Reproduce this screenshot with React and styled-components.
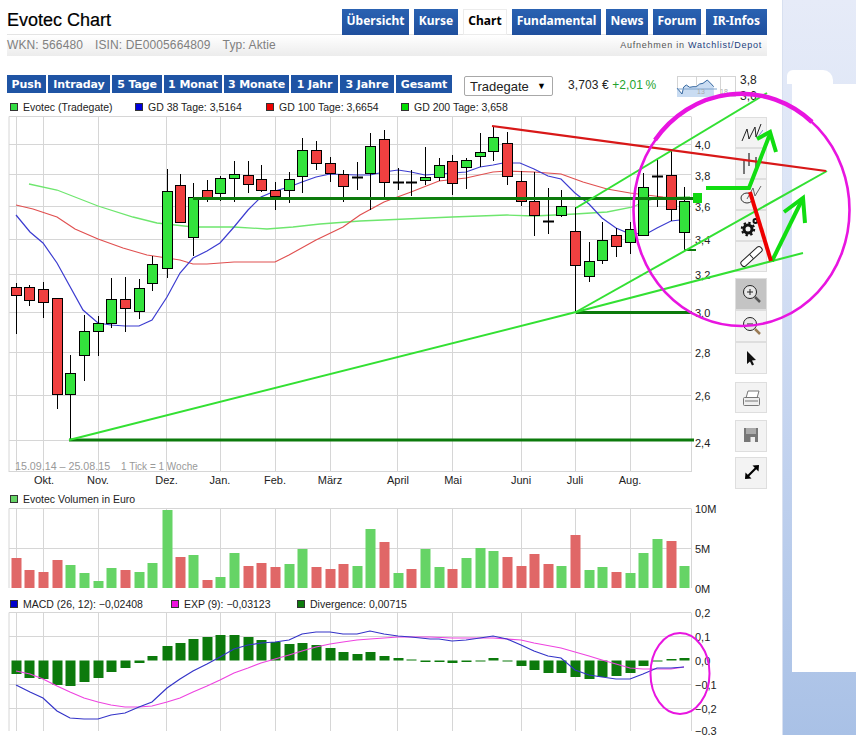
import React from "react";
import styled, { createGlobalStyle } from "styled-components";

const GlobalStyle = createGlobalStyle`
  html, body {
    margin: 0;
    padding: 0;
    background: #fff;
    font-family: "Liberation Sans", Arial, sans-serif;
  }
`;

const Page = styled.div`
  position: relative;
  display: flex;
  width: 856px;
  height: 735px;
  overflow: hidden;
`;
const Main = styled.div`
  width: 782px;
  flex: none;
  border-right: 1px solid #d8e0f0;
`;
const Side = styled.div`
  flex: 1;
  padding: 70px 0 0 9px;
  background: linear-gradient(180deg, #e6ebf8 0, #dce5f6 25%, #c3d3ef 60%, #a9c1e6 100%);
`;
const SideBlob = styled.div`
  width: 46px;
  height: 14px;
  margin-left: -5px;
  border-radius: 6px 10px 0 0;
  background: #fff;
`;
const SidePatch = styled.div`
  height: 588px;
  background: #fff;
`;

const Header = styled.div`
  display: flex;
  justify-content: space-between;
  align-items: flex-end;
  height: 34px;
  margin: 0 15px 0 7px;
  border-bottom: 1px solid #e4e4e4;
`;
const Title = styled.h1`
  margin: 0 0 3px;
  font-size: 18px;
  line-height: 22px;
  font-weight: 400;
  color: #000;
  -webkit-text-stroke: 0.2px #000;
`;
const Tabs = styled.div`
  display: flex;
  gap: 5px;
  margin-bottom: -1px;
`;
const Tab = styled.a`
  width: ${(p) => p.$width}px;
  height: 26px;
  box-sizing: border-box;
  padding-bottom: 3px;
  display: flex;
  align-items: center;
  justify-content: center;
  font-family: "Noto Sans", Tahoma, sans-serif;
  font-size: 12px;
  font-weight: 700;
  color: ${(p) => (p.$active ? "#000" : "#fff")};
  background: ${(p) => (p.$active ? "#fff" : "linear-gradient(180deg, #2a62b2, #1f4f9d)")};
  box-shadow: ${(p) => (p.$active ? "inset 0 0 0 1px #ececec" : "none")};
`;
const SubBar = styled.div`
  display: flex;
  justify-content: space-between;
  align-items: center;
  height: 21px;
  margin: 0 15px 0 7px;
  padding: 0 5px 2px 0;
  box-sizing: border-box;
  background: linear-gradient(180deg, #fff, #ececec);
`;
const Codes = styled.div`
  display: flex;
  gap: 12px;
  font-size: 12px;
  letter-spacing: 0.12px;
  color: #808080;
`;
const Watch = styled.div`
  font-size: 9px;
  letter-spacing: 0.75px;
  color: #555;
  & a {
    color: #1c3f80;
  }
`;

const Controls = styled.div`
  display: flex;
  align-items: flex-start;
  height: 42px;
  box-sizing: border-box;
  padding: 19px 0 0 7px;
`;
const Ranges = styled.div`
  display: flex;
  gap: 2px;
`;
const Range = styled.a`
  width: ${(p) => p.$width}px;
  height: 18px;
  display: flex;
  align-items: center;
  justify-content: center;
  font-family: "DejaVu Sans", Verdana, sans-serif;
  font-size: 11px;
  font-weight: 700;
  letter-spacing: -0.1px;
  white-space: nowrap;
  color: #fff;
  background: #1f54a4;
`;
const Exchange = styled.div`
  width: 89px;
  height: 20px;
  box-sizing: border-box;
  margin: 1px 0 0 12px;
  padding: 0 6px 0 5px;
  display: flex;
  justify-content: space-between;
  align-items: center;
  border: 1px solid #a8a8a8;
  border-radius: 2px;
  font-size: 13px;
  color: #222;
  & span:last-child {
    font-size: 9px;
    color: #000;
  }
`;
const Quote = styled.div`
  width: 109px;
  margin: 3px 0 0 15px;
  font-size: 12px;
  line-height: 14px;
  letter-spacing: 0.1px;
  color: #222;
  white-space: nowrap;
  & em {
    font-style: normal;
    color: #22a32c;
  }
`;
const MiniChart = styled.svg`
  width: 82px;
  height: 26px;
  margin-top: 1px;
  flex: none;
  overflow: visible;
  font-family: "Liberation Sans", Arial, sans-serif;
`;

const ChartRow = styled.div`
  display: flex;
`;
const ChartColumn = styled.div`
  width: 735px;
  flex: none;
`;
const Legend = styled.div`
  display: flex;
  height: ${(p) => p.$height}px;
  align-items: center;
  padding-left: 10px;
  font-size: 10.5px;
  color: #222;
`;
const LegendItem = styled.span`
  display: flex;
  align-items: center;
  gap: 5px;
  width: ${(p) => (p.$width ? `${p.$width}px` : "auto")};
  white-space: nowrap;
`;
const Swatch = styled.i`
  width: 8px;
  height: 8px;
  box-sizing: border-box;
  border: 1px solid #333;
  background: ${(p) => p.$color};
`;
const Plot = styled.svg`
  display: block;
  width: 735px;
  height: ${(p) => p.$height}px;
  overflow: visible;
  font-family: "Liberation Sans", Arial, sans-serif;
  font-size: 11px;
  fill: #222;
`;

const Toolbar = styled.div`
  width: 32px;
  padding-top: 19px;
  display: flex;
  flex-direction: column;
`;
const Tool = styled.button`
  width: 32px;
  height: ${(p) => p.$height || 31}px;
  margin-top: ${(p) => p.$gap || 0}px;
  padding: 0;
  display: flex;
  align-items: center;
  justify-content: center;
  box-sizing: border-box;
  border: 1px solid #dedede;
  background: ${(p) => (p.$active ? "#c4c4c4" : "#f3f3f3")};
`;
const Icon = styled.svg`
  width: 24px;
  height: 24px;
  display: block;
`;
const Overlay = styled.svg`
  position: absolute;
  inset: 0;
  width: 856px;
  height: 735px;
  pointer-events: none;
`;

const gridX = [9, 16.5, 43.5, 98.5, 166.5, 220.5, 275.5, 330.5, 397.5, 452.5, 521.5, 575.5, 630.5, 691.5];

// x, wick top, wick bottom, body top, body bottom, colour (d = doji)
const candles = [
  [16, 283, 334, 287, 295, "r"], [29, 285, 306, 287, 300, "r"], [43, 282, 318, 289, 302, "r"],
  [57, 298, 409, 298, 394, "r"], [70, 355, 440, 373, 394, "g"], [84, 315, 381, 331, 355, "g"],
  [98, 316, 356, 323, 331, "g"], [111, 278, 328, 299, 323, "g"], [125, 277, 332, 299, 308, "r"],
  [139, 279, 319, 288, 311, "g"], [152, 256, 291, 264, 283, "g"], [167, 169, 278, 191, 268, "g"],
  [180, 174, 222, 185, 222, "r"], [193, 183, 256, 197, 237, "g"], [207, 180, 202, 190, 198, "r"],
  [220, 176, 201, 178, 193, "g"], [234, 161, 202, 174, 178, "g"], [248, 161, 193, 175, 184, "r"],
  [261, 165, 192, 179, 190, "r"], [275, 182, 210, 190, 196, "r"], [289, 172, 203, 179, 190, "g"],
  [302, 138, 193, 150, 176, "g"], [316, 141, 170, 150, 163, "r"], [330, 157, 182, 163, 173, "r"],
  [343, 170, 202, 174, 186, "r"], [357, 162, 190, 177, 177, "d"], [370, 133, 210, 146, 173, "g"],
  [384, 130, 198, 139, 182, "r"], [398, 168, 190, 182, 182, "d"], [411, 170, 196, 182, 182, "d"],
  [425, 147, 185, 177, 180, "g"], [439, 158, 181, 165, 177, "g"], [452, 155, 195, 161, 183, "r"],
  [466, 158, 189, 160, 167, "g"], [480, 133, 167, 152, 156, "g"], [493, 127, 161, 137, 151, "g"],
  [507, 132, 185, 143, 176, "r"], [521, 171, 206, 181, 201, "r"], [534, 172, 236, 201, 215, "r"],
  [548, 188, 234, 221, 221, "d"], [561, 190, 217, 206, 215, "g"], [575, 207, 312, 231, 265, "r"],
  [589, 242, 282, 261, 276, "g"], [602, 222, 264, 240, 260, "g"], [616, 228, 257, 235, 246, "r"],
  [630, 222, 254, 229, 242, "g"], [643, 173, 236, 187, 235, "g"], [657, 159, 207, 176, 176, "d"],
  [671, 150, 221, 175, 209, "r"], [684, 187, 250, 201, 232, "g"],
];

const gd38 = "16,215 30,232 43,243 57,263 83,310 98,323 111,325 125,326 139,326 152,320 167,297 180,273 193,258 207,251 220,243 234,227 248,210 261,197 275,191 289,187 302,182 316,177 330,174 357,175 370,175 384,172 398,170 411,172 425,175 439,174 452,173 466,172 480,167 493,165 503,163 520,163 534,169 548,176 561,179 575,193 589,204 602,218 616,228 630,234 648,233 657,228 671,221 680,220";
const gd100 = "16,205 33,209 57,217 75,229 98,239 123,248 147,255 167,258 180,260 193,264 207,264 234,262 275,262 289,255 316,240 343,227 360,215 384,202 411,192 439,181 466,178 493,172 507,171 534,172 561,174 583,182 607,189 630,193 663,197 690,198";
const gd200 = "29,184 57,190 98,206 133,217 157,223 193,227 234,227 267,229 293,227 320,224 360,221 452,217 507,215 534,216 575,214 607,212 633,207 643,202 657,198 690,197";

const priceTicks = [["4,0", 149], ["3,8", 180], ["3,6", 211], ["3,4", 244], ["3,2", 279], ["3,0", 317], ["2,8", 357], ["2,6", 400], ["2,4", 447]];
const priceGrid = [144.5, 174.5, 206.5, 239.5, 274.5, 312.5, 352.5, 395.5, 440.5];
const months = [["Okt.", 44], ["Nov.", 98], ["Dez.", 166.5], ["Jan.", 220], ["Feb.", 275], ["März", 330], ["April", 398], ["Mai", 453], ["Juni", 521], ["Juli", 575], ["Aug.", 630]];

// top of each volume bar and its colour, one per candle
const volume = [
  [558, "r"], [570, "r"], [572, "r"], [560, "r"], [565, "g"], [573, "g"], [581, "g"], [568, "g"], [570, "r"], [572, "g"],
  [563, "g"], [510, "g"], [557, "r"], [555, "g"], [580, "r"], [577, "g"], [553, "g"], [566, "r"], [563, "r"], [567, "r"],
  [564, "g"], [549, "g"], [567, "r"], [569, "r"], [564, "r"], [566, "g"], [529, "g"], [542, "r"], [573, "g"], [569, "r"],
  [549, "g"], [567, "g"], [569, "r"], [558, "g"], [548, "g"], [551, "g"], [557, "r"], [566, "r"], [554, "r"], [564, "r"],
  [566, "g"], [535, "r"], [570, "g"], [567, "g"], [572, "r"], [573, "g"], [553, "g"], [539, "g"], [541, "r"], [566, "g"],
];

const divergence = [674, 678, 679, 685, 686, 682, 678, 672, 668, 663, 656, 646, 643, 639, 637, 635, 635, 637, 640, 642, 644, 643, 645, 648, 652, 654, 652, 656, 658, 659.5, 662, 662, 663, 662, 661.5, 658, 661.5, 666, 670, 673, 673, 677, 679, 677, 676, 673, 666, 661.5, 659, 658];

const macd = "16,685 30,692 43,698 57,711 70,718 84,719 98,719 111,715 125,713 139,707 152,702 167,688 180,679 193,671 207,664 220,657 234,649 248,645 261,643 275,642 289,640 302,634 316,632 330,632 343,634 357,634 370,631 384,634 398,636 411,637 430,639 439,639 452,641 466,640 480,638 493,636 507,639 521,645 534,651 548,656 561,658 575,670 589,675 602,677 616,679 630,679 643,674 657,668 671,668 684,667";
const signal = "16,671 30,674 43,679 57,686 70,692 84,698 98,702 111,705 125,707 139,707 152,706 167,702 180,698 193,692 207,686 220,680 234,673 248,668 261,663 275,659 289,655 302,651 316,647 330,644 343,642 357,640 370,639 384,638 398,637 430,637 452,638 493,638 521,640 534,643 561,648 575,652 589,656 602,660 616,664 630,668 643,669 657,669 671,669 684,667";

const miniLine = "0,12 5,18 6.7,11 9.3,9 12.7,11.3 16,10.7 19.3,10.7 22.7,8 26,7.3 30.3,4 34.3,8 36.7,10.7";

const volColor = { r: "#e06767", g: "#66d466" };
const bodyColor = { r: "#f04040", g: "#33e33c", d: "#000" };

function Grid({ top, bottom, lines }) {
  return (
    <g stroke="#d6d6d6" strokeWidth="1" fill="none">
      {gridX.map((x) => (
        <line key={x} x1={x} x2={x} y1={top} y2={bottom} />
      ))}
      {lines.map((y) => (
        <line key={y} x1={9} x2={691} y1={y} y2={y} />
      ))}
    </g>
  );
}

function PriceChart() {
  return (
    <Plot $height={374} viewBox="0 116 735 374">
      <Grid top={116.5} bottom={472} lines={[116.5, ...priceGrid, 471.5]} />
      <polyline points={gd200} fill="none" stroke="#6ee66e" strokeWidth="1.3" />
      <polyline points={gd100} fill="none" stroke="#e05050" strokeWidth="1.2" />
      <polyline points={gd38} fill="none" stroke="#3c3cd0" strokeWidth="1.2" />
      {candles.map(([x, wt, wb, bt, bb, c]) => (
        <g key={x}>
          <line x1={x + 0.5} x2={x + 0.5} y1={wt} y2={wb} stroke="#000" strokeWidth="1" />
          {c === "d" ? (
            <line x1={x - 5} x2={x + 6} y1={bt + 0.5} y2={bt + 0.5} stroke="#000" strokeWidth="2" />
          ) : (
            <rect x={x - 4.5} y={bt + 0.5} width="10" height={bb - bt} fill={bodyColor[c]} stroke="#000" strokeWidth="1" />
          )}
        </g>
      ))}
      {priceTicks.map(([t, y]) => (
        <text key={t} x="695" y={y}>{t}</text>
      ))}
      <text x="15" y="470" fontSize="10.7" fill="#999">15.09.14 – 25.08.15</text>
      <text x="121" y="470" fontSize="10" fill="#999">1 Tick = 1 Woche</text>
      {months.map(([t, x]) => (
        <text key={t} x={x} y="484" textAnchor="middle">{t}</text>
      ))}
    </Plot>
  );
}

function VolumeChart() {
  return (
    <Plot $height={87} viewBox="0 508 735 87">
      <Grid top={508.5} bottom={588} lines={[508.5, 548.5]} />
      {volume.map(([top, c], i) => (
        <rect key={i} x={candles[i][0] - 4.5} y={top} width="10" height={588 - top} fill={volColor[c]} />
      ))}
      <text x="695" y="513">10M</text>
      <text x="695" y="553">5M</text>
      <text x="695" y="593">0M</text>
    </Plot>
  );
}

function MacdChart() {
  return (
    <Plot $height={123} viewBox="0 612 735 123">
      <Grid top={612.5} bottom={731} lines={[612.5, 636.5, 684.5, 708.5]} />
      {divergence.map((y, i) => (
        <rect
          key={i}
          x={candles[i][0] - 4.5}
          y={Math.min(y, 660.5)}
          width="10"
          height={Math.abs(y - 660.5)}
          fill="#0c7a0c"
        />
      ))}
      <polyline points={signal} fill="none" stroke="#ee44e0" strokeWidth="1.2" />
      <polyline points={macd} fill="none" stroke="#3434c8" strokeWidth="1.2" />
      <text x="695" y="617">0,2</text>
      <text x="695" y="641">0,1</text>
      <text x="695" y="665">0,0</text>
      <text x="695" y="689">−0,1</text>
      <text x="695" y="713">−0,2</text>
      <text x="695" y="734.5">−0,3</text>
    </Plot>
  );
}

function Mini() {
  return (
    <MiniChart viewBox="0 0 82 26">
      <g stroke="#d4d4d4" fill="none">
        <rect x="0.5" y="0.5" width="58" height="20" />
        <line x1="19.5" x2="19.5" y1="0" y2="20" />
        <line x1="43.5" x2="43.5" y1="0" y2="20" />
      </g>
      <polygon points={`${miniLine} 37,21 0,21`} fill="#c9dcf2" />
      <polyline points={miniLine} fill="none" stroke="#33669f" strokeWidth="1" />
      <line x1="0" x2="40" y1="13" y2="13" stroke="#7fa3cc" />
      <text x="20" y="18" fontSize="7" fill="#aaa">13</text>
      <text x="43" y="18" fontSize="7" fill="#aaa">18</text>
      <text x="63" y="8" fontSize="12" fill="#222">3,8</text>
      <text x="63" y="24" fontSize="12" fill="#222">3,6</text>
    </MiniChart>
  );
}

const tools = [
  {
    h: 31,
    icon: (
      <g fill="none" strokeWidth="1">
        <line x1="18" y1="17" x2="24" y2="9" stroke="#8a8ad8" />
        <polyline points="3,20 8,8 10,18 16,6 17,16 22,3" stroke="#222" />
      </g>
    ),
  },
  {
    h: 31,
    icon: (
      <g stroke="#777" strokeWidth="2" fill="none">
        <line x1="5" x2="5" y1="7" y2="22" />
        <line x1="10" x2="10" y1="1" y2="14" />
        <line x1="17" x2="17" y1="5" y2="18" />
      </g>
    ),
  },
  {
    h: 31,
    icon: (
      <g fill="none" strokeWidth="1">
        <ellipse cx="8" cy="15" rx="6" ry="5" stroke="#333" />
        <polyline points="8,16 14,5 16,13 22,3" stroke="#666" />
      </g>
    ),
  },
  {
    h: 31,
    icon: (
      <g fill="none" stroke="#111">
        <circle cx="9" cy="15" r="4" strokeWidth="3" />
        <circle cx="9" cy="15" r="6.2" strokeWidth="2" strokeDasharray="2.4 2.4" />
        <circle cx="16.5" cy="7" r="2" strokeWidth="2" />
      </g>
    ),
  },
  {
    h: 31,
    icon: (
      <g transform="rotate(-42 12.5 11.5)" fill="#fff" stroke="#222" strokeWidth="1">
        <rect x="-0.5" y="8.5" width="26" height="6" rx="2.5" />
        <line x1="12.5" x2="12.5" y1="8.5" y2="14.5" />
      </g>
    ),
  },
  {
    h: 32,
    gap: 6,
    active: true,
    icon: (
      <g fill="none">
        <circle cx="11" cy="10" r="6.5" stroke="#222" strokeWidth="1" fill="#e8e8e8" />
        <path d="M8 10h6M11 7v6" stroke="#222" />
        <line x1="16" y1="15" x2="21" y2="20" stroke="#555" strokeWidth="2.5" />
      </g>
    ),
  },
  {
    h: 32,
    icon: (
      <g fill="none">
        <circle cx="11" cy="10" r="6.5" stroke="#222" strokeWidth="1" fill="#e8e8e8" />
        <path d="M8 10h6" stroke="#222" />
        <line x1="16" y1="15" x2="21" y2="20" stroke="#9a7b55" strokeWidth="2.5" />
      </g>
    ),
  },
  {
    h: 32,
    icon: <path d="M8 5 L8 18 L11 15.5 L13 19.5 L15 18.5 L13 14.5 L17 14 Z" fill="#111" />,
  },
  {
    h: 31,
    gap: 8,
    icon: (
      <g fill="none" stroke="#777" strokeWidth="1">
        <path d="M7 12 L9 5 H20 L18 12" fill="#fff" />
        <rect x="4.5" y="11.5" width="16" height="8" rx="1" fill="#eee" />
        <line x1="6" x2="19" y1="15" y2="15" />
      </g>
    ),
  },
  {
    h: 32,
    gap: 7,
    icon: (
      <g>
        <path d="M5 4 H19 V18 H5 Z" fill="#777" />
        <rect x="7" y="4" width="10" height="6" fill="#aaa" />
        <rect x="11.5" y="13" width="4.5" height="5" fill="#eee" />
      </g>
    ),
  },
  {
    h: 32,
    gap: 5,
    icon: (
      <g fill="#000">
        <line x1="8.5" y1="15.5" x2="17.5" y2="6.5" stroke="#000" strokeWidth="2.2" />
        <path d="M20 4 L19.5 10.5 L13.5 4.5 Z" />
        <path d="M6 18 L6.5 11.5 L12.5 17.5 Z" />
      </g>
    ),
  },
];

export default function App() {
  return (
    <Page>
      <GlobalStyle />
      <Main>
        <Header>
          <Title>Evotec Chart</Title>
          <Tabs>
            <Tab $width={67}>Übersicht</Tab>
            <Tab $width={44}>Kurse</Tab>
            <Tab $width={44} $active>Chart</Tab>
            <Tab $width={89}>Fundamental</Tab>
            <Tab $width={42}>News</Tab>
            <Tab $width={48}>Forum</Tab>
            <Tab $width={61}>IR-Infos</Tab>
          </Tabs>
        </Header>
        <SubBar>
          <Codes>
            <span>WKN: 566480</span>
            <span>ISIN: DE0005664809</span>
            <span>Typ: Aktie</span>
          </Codes>
          <Watch>
            Aufnehmen in <a>Watchlist/Depot</a>
          </Watch>
        </SubBar>
        <Controls>
          <Ranges>
            <Range $width={39}>Push</Range>
            <Range $width={62}>Intraday</Range>
            <Range $width={50}>5 Tage</Range>
            <Range $width={58}>1 Monat</Range>
            <Range $width={65}>3 Monate</Range>
            <Range $width={47}>1 Jahr</Range>
            <Range $width={54}>3 Jahre</Range>
            <Range $width={56}>Gesamt</Range>
          </Ranges>
          <Exchange>
            <span>Tradegate</span>
            <span>▼</span>
          </Exchange>
          <Quote>
            3,703 € <em>+2,01&#8201;%</em>
          </Quote>
          <Mini />
        </Controls>
        <ChartRow>
          <ChartColumn>
            <Legend $height={18}>
              <LegendItem $width={125}><Swatch $color="#33dd44" />Evotec (Tradegate)</LegendItem>
              <LegendItem $width={131}><Swatch $color="#0000dd" />GD 38 Tage: 3,5164</LegendItem>
              <LegendItem $width={135}><Swatch $color="#ee0000" />GD 100 Tage: 3,6654</LegendItem>
              <LegendItem><Swatch $color="#00dd00" />GD 200 Tage: 3,658</LegendItem>
            </Legend>
            <PriceChart />
            <Legend $height={18}>
              <LegendItem><Swatch $color="#66d466" />Evotec Volumen in Euro</LegendItem>
            </Legend>
            <VolumeChart />
            <Legend $height={17}>
              <LegendItem $width={161}><Swatch $color="#0000cc" />MACD (26, 12): −0,02408</LegendItem>
              <LegendItem $width={126}><Swatch $color="#ee11dd" />EXP (9): −0,03123</LegendItem>
              <LegendItem><Swatch $color="#0c7a0c" />Divergence: 0,00715</LegendItem>
            </Legend>
            <MacdChart />
          </ChartColumn>
          <Toolbar>
            {tools.map((t, i) => (
              <Tool key={i} $height={t.h} $gap={t.gap} $active={t.active}>
                <Icon viewBox="0 0 24 24">{t.icon}</Icon>
              </Tool>
            ))}
          </Toolbar>
        </ChartRow>
      </Main>
      <Side>
        <SideBlob />
        <SidePatch />
      </Side>
      <Overlay viewBox="0 0 856 735">
        <g stroke="#0c7a0c" strokeWidth="3">
          <line x1="193" x2="696" y1="198.5" y2="198.5" />
          <line x1="576" x2="692" y1="312.5" y2="312.5" />
          <line x1="69" x2="694" y1="440" y2="440" />
          <line x1="684" x2="696" y1="250" y2="250" strokeWidth="2" />
        </g>
        <rect x="693" y="193" width="9" height="10" fill="#11d811" />
        <g stroke="#33e033" strokeWidth="2" fill="none">
          <polyline points="69,440 576,312 803,253" />
          <line x1="576" y1="312" x2="827" y2="171" />
          <line x1="576" y1="208" x2="767" y2="93" />
        </g>
        <line x1="492" y1="126" x2="826" y2="171" stroke="#d81818" strokeWidth="2.2" />
        <g stroke="#11dd11" strokeWidth="4" fill="none">
          <polyline points="706,188 749,188 770,134" />
          <polyline points="757,139 770,132 776,152" />
          <line x1="772" y1="261" x2="802" y2="200" />
          <polyline points="784,212 803,198 805,223" />
        </g>
        <line x1="750" y1="192" x2="771" y2="261" stroke="#ee0000" strokeWidth="4" />
        <ellipse cx="741.5" cy="210" rx="108" ry="116" fill="none" stroke="#e815e0" strokeWidth="2.6" />
        <path d="M655 140 A108 116 0 0 1 812 122" fill="none" stroke="#e815e0" strokeWidth="4.5" />
        <ellipse cx="680" cy="673.5" rx="29.5" ry="40.5" fill="none" stroke="#e815e0" strokeWidth="2" />
      </Overlay>
    </Page>
  );
}
